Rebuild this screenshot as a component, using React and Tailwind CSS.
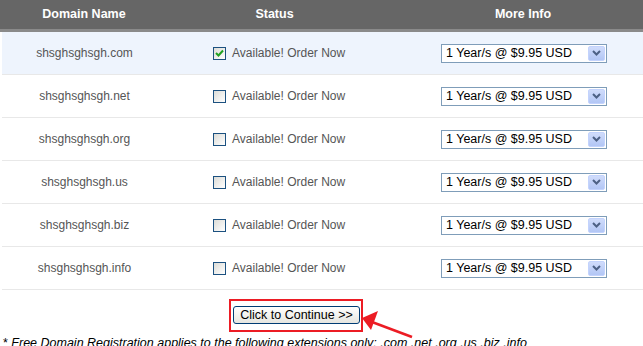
import React from "react";

const rows = [
  { name: "shsghsghsgh.com", checked: true, alt: true },
  { name: "shsghsghsgh.net" },
  { name: "shsghsghsgh.org" },
  { name: "shsghsghsgh.us" },
  { name: "shsghsghsgh.biz" },
  { name: "shsghsghsgh.info" },
];

function Checkbox({ checked }) {
  return (
    <div className="w-[13px] h-[13px] border border-[#1c5180] bg-gradient-to-br from-[#dcdcd7] to-[#ffffff] flex items-center justify-center">
      {checked && (
        <svg width="9" height="9" viewBox="0 0 9 9">
          <path d="M1 4 L3.5 6.5 L8 1.5" stroke="#21a121" strokeWidth="2" fill="none" />
        </svg>
      )}
    </div>
  );
}

function SelectBox() {
  return (
    <div className="w-[166px] h-[19px] border border-[#7f9db9] bg-white flex items-center justify-between pl-[4px] pr-[1px]">
      <span className="text-[12.5px] text-black leading-none">1 Year/s @ $9.95 USD</span>
      <div className="w-[17px] h-[15px] rounded-[2px] bg-gradient-to-b from-[#d0dcfb] to-[#b2c6f5] border border-[#c3d3fd] flex items-center justify-center">
        <svg width="9" height="6" viewBox="0 0 9 6">
          <path d="M1 1 L4.5 4.5 L8 1" stroke="#4d6185" strokeWidth="2" fill="none" />
        </svg>
      </div>
    </div>
  );
}

export default function App() {
  return (
    <div
      className="relative w-[643px] h-[346px] overflow-hidden bg-white"
      style={{ fontFamily: '"Liberation Sans", Arial, sans-serif' }}
    >
      <div className="w-[660px]">
        <div className="grid grid-cols-[167px_219px_274px] h-[32px] bg-[#666666] border-b-[3px] border-[#8a8a8a] text-white font-bold text-[12.5px] items-center">
          <div className="text-center pl-[1px]">Domain Name</div>
          <div className="text-center pr-[4px]">Status</div>
          <div className="text-center">More Info</div>
        </div>
        {rows.map((r) => (
          <div
            key={r.name}
            className={`grid grid-cols-[167px_219px_274px] h-[43px] ml-[2px] border-b border-[#e8e8e8] items-center text-[12px] text-[#555555] ${
              r.alt ? "bg-[#eef4fd]" : "bg-white"
            }`}
          >
            <div className="text-center -ml-[2px]">{r.name}</div>
            <div className="flex items-center gap-[6px] pl-[44px]">
              <Checkbox checked={r.checked} />
              <span>Available! Order Now</span>
            </div>
            <div className="flex justify-center -ml-[2px]">
              <SelectBox />
            </div>
          </div>
        ))}
      </div>
      <div className="ml-[229px] mt-[9px] w-[134px] h-[33px] border-2 border-[#ec1c24] pl-[2px] pt-[5px]">
        <div className="w-[127px] h-[18px] rounded-[3px] border border-[#003c74] bg-gradient-to-b from-[#ffffff] to-[#e6e6e0] flex items-center justify-center text-[12.5px] text-black leading-none">
          Click to Continue &gt;&gt;
        </div>
      </div>
      <div className="mt-[4px] pl-[3px] text-[12.5px] text-black leading-[15px] whitespace-nowrap">
        * <i>Free Domain Registration applies to the following extensions only: .com .net .org .us .biz .info</i>
      </div>
      <svg className="absolute left-0 top-0" width="643" height="346" viewBox="0 0 643 346">
        <line x1="372" y1="322" x2="412" y2="337" stroke="#ec1c24" strokeWidth="2.5" />
        <polygon points="362,318 378,311 371,330" fill="#ec1c24" />
      </svg>
    </div>
  );
}
